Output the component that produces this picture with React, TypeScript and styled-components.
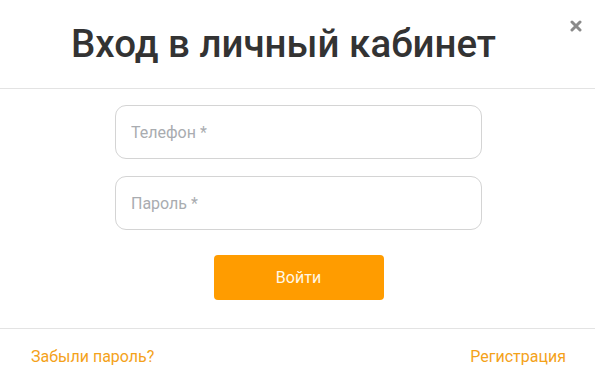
import React from "react";
import styled, { createGlobalStyle } from "styled-components";

const Global = createGlobalStyle`
  html, body { margin: 0; padding: 0; background: #fff; }
  body { font-family: Roboto, "Noto Sans", Arial, sans-serif; }
  * { box-sizing: border-box; }
`;

const Modal = styled.div`
  width: 595px;
  height: 384px;
  background: #fff;
  position: relative;
  display: flex;
  flex-direction: column;
`;

const Header = styled.div`
  height: 89px;
  border-bottom: 1px solid #e3e3e3;
  display: flex;
  align-items: center;
  justify-content: center;
  padding: 0 28px 2px 0;
`;

const Title = styled.h1`
  margin: 0;
  font-family: Roboto, sans-serif;
  font-weight: 500;
  font-size: 38.5px;
  color: #333;
  letter-spacing: 0;
`;

const Close = styled.button`
  position: absolute;
  top: 18px;
  right: 11px;
  width: 16px;
  height: 16px;
  padding: 0;
  border: none;
  background: transparent;
  display: flex;
  align-items: center;
  justify-content: center;
  cursor: pointer;
`;

const Body = styled.form`
  display: flex;
  flex-direction: column;
  align-items: center;
  padding: 16px 0 0 2px;
  height: 240px;
  border-bottom: 1px solid #e3e3e3;
`;

const Field = styled.input`
  width: 367px;
  height: 54px;
  border: 1px solid #d4d4d4;
  border-radius: 11px;
  padding: 0 15px;
  font-family: Roboto, sans-serif;
  font-size: 16px;
  color: #333;
  outline: none;
  margin-bottom: 17px;
  &::placeholder { color: #a9acb0; }
`;

const Submit = styled.button`
  margin-top: 8px;
  width: 170px;
  height: 45px;
  border: none;
  border-radius: 4px;
  background: #ff9c00;
  color: #fff8e6;
  font-family: Roboto, sans-serif;
  font-size: 16px;
  cursor: pointer;
`;

const Footer = styled.div`
  display: flex;
  justify-content: space-between;
  align-items: center;
  padding: 0 29px 0 31px;
  flex: 1;
`;

const Link = styled.a`
  font-family: Roboto, sans-serif;
  font-size: 16px;
  color: #f4a21a;
  text-decoration: none;
  cursor: pointer;
`;

export default function App() {
  return (
    <>
      <Global />
      <Modal>
        <Header>
          <Title>Вход в личный кабинет</Title>
        </Header>
        <Close aria-label="Закрыть">
          <svg width="12" height="12" viewBox="0 0 12 12">
            <path d="M2 2 L10 10 M10 2 L2 10" stroke="#8a8a8a" strokeWidth="3" strokeLinecap="round" />
          </svg>
        </Close>
        <Body onSubmit={(e) => e.preventDefault()}>
          <Field type="tel" placeholder="Телефон *" />
          <Field type="password" placeholder="Пароль *" />
          <Submit type="submit">Войти</Submit>
        </Body>
        <Footer>
          <Link>Забыли пароль?</Link>
          <Link>Регистрация</Link>
        </Footer>
      </Modal>
    </>
  );
}
